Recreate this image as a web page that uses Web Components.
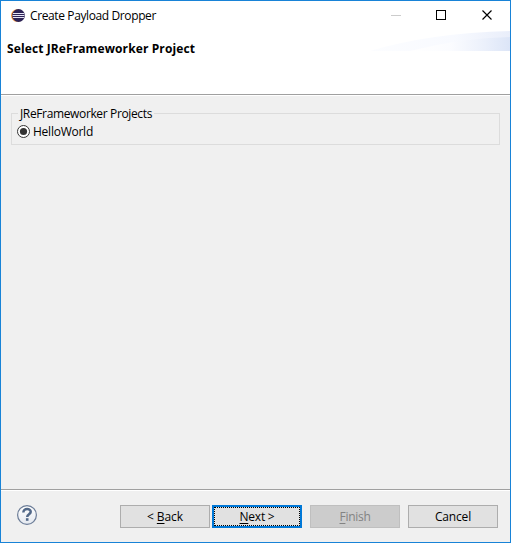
<!DOCTYPE html>
<html lang="en"><head><meta charset="utf-8"><title>Create Payload Dropper</title>
<style>html,body{margin:0;height:100%;overflow:hidden}body{font:12px/16px "Open Sans","Noto Sans",sans-serif;color:#000}</style></head>
<body>
<wizard-dialog>
  <title-bar slot="title"><fit-text width="126">Create Payload Dropper</fit-text></title-bar>
  <wizard-header slot="header"><fit-text width="188">Select JReFrameworker Project</fit-text></wizard-header>
  <group-box slot="body">
    <fit-text slot="legend" width="132">JReFrameworker Projects</fit-text>
    <radio-option><fit-text width="60">HelloWorld</fit-text></radio-option>
  </group-box>
  <wizard-footer slot="footer">
    <push-button><fit-text width="36">&lt; <u>B</u>ack</fit-text></push-button>
    <push-button focused><fit-text width="35"><u>N</u>ext &gt;</fit-text></push-button>
    <push-button disabled><fit-text width="31"><u>F</u>inish</fit-text></push-button>
    <push-button><fit-text width="36">Cancel</fit-text></push-button>
  </wizard-footer>
</wizard-dialog>
<script>
const define = (name, html, ready) => {
  const t = document.createElement('template');
  t.innerHTML = html;
  customElements.define(name, class extends HTMLElement {
    constructor() { super(); this.attachShadow({mode: 'open'}).append(t.content.cloneNode(true)); }
    connectedCallback() { if (ready) ready(this); }
  });
};
define('wizard-dialog', `<style>
:host{display:flex;flex-direction:column;box-sizing:border-box;width:511px;height:543px;border:1px solid #1883d7;background:#f0f0f0}
main{flex:1;padding:9px 10px 0}
</style><slot name="title"></slot><slot name="header"></slot><main><slot name="body"></slot></main><slot name="footer"></slot>`);
define('title-bar', `<style>
:host{display:flex;height:30px;background:#fff;align-items:center;padding-left:9px}
.logo{margin:0 4px 0 0}.caps{margin-left:auto;display:block}
</style>
<svg class="logo" width="16" height="16" viewBox="0 0 16 16"><circle cx="7.3" cy="7.500" r="6.300" fill="#f6943a"/><circle cx="8.500" cy="7.500" r="6.400" fill="#2c2255"/><path d="M3 5.500h11.200M2.500 7.500h12M3 9.500h11.200" stroke="#e6e3f5" stroke-width="1"/></svg>
<slot></slot>
<svg class="caps" width="138" height="30" shape-rendering="crispEdges"><path d="M19 14.5h10" stroke="#ccc"/><rect x="64.5" y="9.5" width="9" height="9" fill="none" stroke="#000"/><path d="M110.5 9.5l9 9M119.500 9.5l-9 9" stroke="#000" stroke-width="1.15" shape-rendering="auto"/></svg>`);
define('wizard-header', `<style>
:host{display:flex;height:65px;box-sizing:border-box;background:#fff;border-bottom:1px solid #fff;box-shadow:inset 0 -1px #a0a0a0;justify-content:space-between;padding-left:6px;font-weight:700}
::slotted(*){margin-top:10px}svg{display:block}
</style><slot></slot>
<svg width="140" height="20"><defs><linearGradient id="a"><stop offset="0" stop-color="#fff"/><stop offset=".4" stop-color="#fbfcff"/><stop offset=".75" stop-color="#ebf0fb"/><stop offset="1" stop-color="#dce5f7"/></linearGradient><linearGradient id="b"><stop offset="0" stop-color="#fcfdff"/><stop offset=".6" stop-color="#f8faff"/><stop offset="1" stop-color="#e9eefa"/></linearGradient></defs><path d="M0 20Q60 2 140 0V20Z" fill="url(#b)"/><path d="M40 20Q90 7 140 6V20Z" fill="url(#a)"/></svg>`);
define('group-box', `<style>
:host{display:block}
fieldset{margin:0;padding:1px 0 0 5px;border:1px solid #dcdcdc;height:40px;min-width:0;box-sizing:border-box}
legend{padding:0 2px;margin-left:1px;height:16px}
::slotted([slot=legend]){position:relative;top:1px}
</style><fieldset><legend><slot name="legend"></slot></legend><slot></slot></fieldset>`);
define('radio-option', `<style>:host{display:flex;align-items:center;gap:3px;height:18px}svg{display:block}::slotted(*){margin-top:1px}</style>
<svg width="13" height="13"><circle cx="6.5" cy="6.5" r="6" fill="#fff" stroke="#333"/><circle cx="6.5" cy="6.5" r="3.6" fill="#333"/></svg><slot></slot>`);
define('wizard-footer', `<style>
:host{display:flex;box-sizing:border-box;height:53px;border-top:1px solid #a0a0a0;box-shadow:inset 0 1px #fff;padding:15px 12px 0 15px;align-items:flex-start}
svg{display:block;margin-right:auto;margin-top:-1px}
.row{display:flex}::slotted(*){margin-left:8px}::slotted([focused]){margin-left:2px}
</style>
<svg width="22" height="22"><defs><linearGradient id="g" x2="0" y2="1"><stop offset="0" stop-color="#fff"/><stop offset="1" stop-color="#e4e8ef"/></linearGradient></defs><circle cx="11" cy="11" r="9.4" fill="url(#g)" stroke="#6b7c97" stroke-width="1.2"/><path d="M7.400 8.500C7.200 3.900 14.900 3.900 14.700 7.900C14.600 10.300 11.200 10.200 11.200 13" fill="none" stroke="#526888" stroke-width="2.500"/><path d="M9.900 14.200h2.600v2.600h-2.600z" fill="#526888"/></svg><div class="row"><slot></slot></div>`);
define('push-button', `<style>
:host{display:flex;box-sizing:border-box;width:90px;height:23px;align-items:center;justify-content:center;border:1px solid #adadad;background:#e1e1e1}
:host([focused]){border:2px solid #0078d7;outline:1px dotted #000;outline-offset:-3px}
:host([disabled]){background:#ccc;border-color:#bfbfbf;color:#838383}
</style><slot></slot>`);
/* Spreads its text evenly over the width given in pixels. */
define('fit-text', `<style>:host{display:block;white-space:nowrap}span{display:inline-block}::slotted(u){text-decoration-thickness:1px;text-underline-offset:2px}</style><span><slot></slot></span>`, el => {
  const s = el.shadowRoot.querySelector('span'), w = +el.getAttribute('width');
  s.style.letterSpacing = (w - s.getBoundingClientRect().width) / el.textContent.length + 'px';
});
</script></body></html>
